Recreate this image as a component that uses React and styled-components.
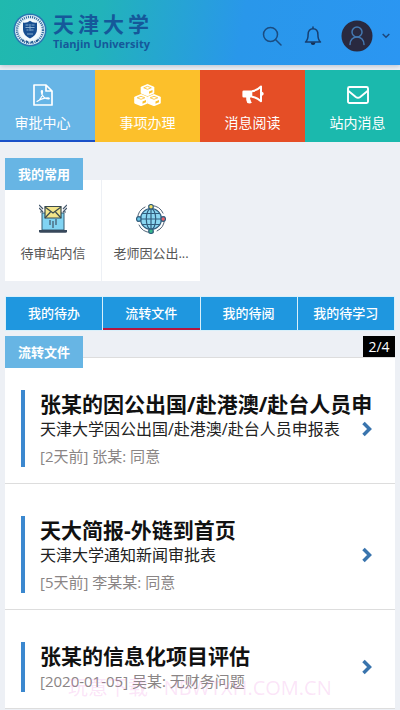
import React, { useState } from "react";
import styled, { createGlobalStyle } from "styled-components";

const GlobalStyle = createGlobalStyle`
  * {
    box-sizing: border-box;
  }

  body {
    margin: 0;
    background-color: #edf0f5;
    font-family: "Open Sans", "Noto Sans CJK SC", sans-serif;
    overflow-x: hidden;
  }

  button {
    font-family: inherit;
    border: none;
    padding: 0;
    background: none;
    cursor: pointer;
  }
`;

const Page = styled.div`
  position: relative;
  height: 100vh;
  overflow: hidden;
`;

const Header = styled.header`
  display: flex;
  align-items: center;
  justify-content: space-between;
  height: 65px;
  padding: 0 10px 0 13px;
  background: linear-gradient(100deg, #20b9ae 0%, #22b3ba 25%, #2997ea 60%, #2b96f2 100%);
  box-shadow: 0 1px 5px #b4bdcb;
`;

const Brand = styled.a`
  display: flex;
  align-items: center;
  gap: 6px;
  margin-top: -5px;
  color: #15589a;
  text-decoration: none;
`;

const BrandText = styled.span`
  display: flex;
  flex-direction: column;
`;

const BrandName = styled.span`
  display: flex;
  gap: 4px;
  font-family: "Noto Sans CJK SC", sans-serif;
  font-size: 21px;
  line-height: 28px;
  font-weight: 700;
`;

const BrandSub = styled.span`
  font-size: 11px;
  line-height: 14px;
  font-weight: 700;
`;

const HeaderActions = styled.div`
  display: flex;
  align-items: center;
  margin-top: 6px;
`;

const IconButton = styled.button`
  display: flex;
  margin-right: ${({ $gap }) => $gap || 0}px;
`;

const TileNav = styled.nav`
  display: flex;
  margin: 5px -10px 0;
`;

const NavTile = styled.button`
  flex: 1 0 105px;
  display: flex;
  flex-direction: column;
  align-items: center;
  gap: 7px;
  height: 72px;
  padding-top: 14px;
  background-color: ${({ $color }) => $color};
  border-bottom: 2px solid ${({ $active, $color }) => ($active ? "#1a50c8" : $color)};
  color: #fff;
  font-size: 14px;
  line-height: 20px;
`;

const Main = styled.main`
  padding: 16px 5px 0;
`;

const SectionLabel = styled.h2`
  position: relative;
  width: 78px;
  margin: 0;
  background-color: #67b5e4;
  color: #fff;
  font-size: 13px;
  line-height: 32px;
  font-weight: 700;
  text-align: center;
`;

const Shortcuts = styled.div`
  display: grid;
  grid-template-columns: 96px 98px;
  gap: 1px;
  width: 195px;
  margin-top: -10px;
`;

const Shortcut = styled.button`
  display: flex;
  flex-direction: column;
  align-items: center;
  gap: 9px;
  height: 101px;
  padding-top: 24px;
  background-color: #fff;
  color: #555;
  font-size: 13px;
  line-height: 20px;
`;

const Tabs = styled.div`
  display: grid;
  grid-template-columns: repeat(4, 1fr);
  gap: 1px;
  margin: 15px 0 5px;
  padding: 1px;
  background-color: #d9f0fa;
`;

const Tab = styled.button`
  height: 33px;
  padding-bottom: 2px;
  background-color: #1f97df;
  border-top: 2px solid #1f97df;
  border-bottom: 2px solid ${({ $active }) => ($active ? "#b5173f" : "#1f97df")};
  color: #fff;
  font-size: 13px;
  line-height: 20px;
  font-weight: 500;
`;

const ListHead = styled.div`
  display: flex;
  justify-content: space-between;
  align-items: flex-start;
`;

const Counter = styled.span`
  width: 32px;
  background-color: #000;
  color: #fff;
  font-size: 14px;
  line-height: 21px;
  text-align: center;
`;

const List = styled.ul`
  margin: -11px 0 0;
  padding: 0;
  list-style: none;
  background-color: #fff;
  border-top: 1px solid #ddd;
`;

const ListItem = styled.li`
  padding: 32px 16px 16px;
  border-bottom: 1px solid #ddd;
`;

const ItemLink = styled.a`
  display: flex;
  align-items: center;
  border-left: 4px solid #3b88cf;
  padding-left: 15px;
  color: #222;
  text-decoration: none;
`;

const ItemBody = styled.div`
  flex: 1;
  min-width: 0;
  white-space: nowrap;
`;

const ItemTitle = styled.h3`
  margin: 0;
  font-size: 21px;
  line-height: 28px;
  font-weight: 700;
  color: #111;
`;

const ItemText = styled.p`
  margin: 0 0 5px;
  font-size: 16px;
  line-height: 22px;
`;

const ItemMeta = styled.p`
  margin: 0;
  font-size: 15px;
  line-height: 22px;
  color: #8a8585;
`;

const Arrow = styled.svg`
  flex: none;
  width: 12px;
  height: 16px;
  margin: 0 6px 0 -18px;
`;

const Watermark = styled.div`
  position: absolute;
  left: 68px;
  bottom: 10px;
  color: rgba(236, 120, 220, 0.2);
  font-size: 20px;
  line-height: 24px;
  white-space: nowrap;
  pointer-events: none;
`;

const Crest = () => (
  <svg width="34" height="34" viewBox="0 0 34 34">
    <circle cx="17" cy="17" r="16.5" fill="#2a76b2" />
    <circle cx="17" cy="17" r="15" fill="#e5f2f8" />
    <circle cx="17" cy="17" r="13" fill="none" stroke="#34699f" strokeWidth="2.4" strokeDasharray="1.1 1" />
    <circle cx="17" cy="17" r="10.6" fill="#f4fafc" />
    <path d="M10 9.5q4 .8 7-1.8q3 2.6 7 1.8v7q0 5.500-7 9q-7-3.500-7-9z" fill="#174f91" />
    <path d="M12.500 12h3m3 0h3m-9 2.500h9m-8 2.500h2m2 0h3M17 11v7m-3 3h6" stroke="#8fb7d6" strokeWidth=".9" />
    <path d="M9 27l2 1m2 0l2 1.500m3 0l2-1m3 0l2-1.500" stroke="#20588f" strokeWidth="1.600" />
  </svg>
);

const SearchIcon = () => (
  <svg width="20" height="20" viewBox="0 0 20 20" fill="none" stroke="#1b4c80" strokeWidth="1.500">
    <circle cx="8.500" cy="8.500" r="7" />
    <path d="M13.500 13.500l5.500 5.500" strokeLinecap="round" />
  </svg>
);

const BellIcon = () => (
  <svg width="18" height="20" viewBox="0 0 18 20" fill="none" stroke="#173f70" strokeWidth="1.500" strokeLinejoin="round">
    <path d="M9 1v1.500M1.500 16h15c-2-1.500-2.600-4-2.600-7.500C13.900 5 12 2.700 9 2.700S4.100 5 4.100 8.500c0 3.500-.6 6-2.600 7.500z" strokeLinecap="round" />
    <path d="M6.500 16.500h5q-.5 2.500-2.500 2.500t-2.500-2.500z" fill="#152e52" stroke="none" />
  </svg>
);

const AvatarIcon = () => (
  <svg width="32" height="32" viewBox="0 0 32 32" fill="none" stroke="#4478b0" strokeWidth="1.500">
    <circle cx="16" cy="16" r="15.500" fill="#29293f" stroke="none" />
    <circle cx="16" cy="12" r="5" />
    <path d="M9 24.500c0-4.500 3-7.500 7-7.500s7 3 7 7.500" strokeLinecap="round" />
  </svg>
);

const CaretIcon = () => (
  <svg width="8" height="6" viewBox="0 0 8 6" fill="none" stroke="#1d4679" strokeWidth="1.500">
    <path d="M.7 1L4 4.300 7.300 1" />
  </svg>
);

const PdfIcon = () => (
  <svg width="20" height="22" viewBox="0 0 20 22" fill="none" stroke="#fff" strokeWidth="1.700" strokeLinejoin="round">
    <path d="M1 1h12l6 6v14H1zM13 1v6h6" />
    <path d="M4 17.500c3.500-1.500 5.500-6 5.500-10 0-1.500-1.300-1.200-1.200.3.200 4 3.500 7.200 7 7.200 1.500 0 1.200-1.200-.3-1.200-4 0-8 1.400-11 3.700z" strokeWidth="1.200" />
  </svg>
);

const cubes = [
  [13.5, 0],
  [7, 10],
  [20, 10],
];

const CubesIcon = () => (
  <svg width="27" height="22" viewBox="0 0 27 22">
    {cubes.map(([x, y]) => (
      <g key={x} transform={`translate(${x} ${y})`}>
        <path d="M0 0l6 2.400q.8.400.8 1.200v5q0 .8-.8 1.200L0 12.200l-6-2.400q-.8-.4-.8-1.200v-5q0-.8.8-1.200z" fill="#fff" />
        <path d="M-3.800 3.800L0 2.300l3.800 1.500L0 5.300z" fill="none" stroke="#fcc02b" strokeWidth=".8" />
        <path d="M1.500 7.400L5 6v2.300l-3.500 1.500z" fill="#fcc02b" />
      </g>
    ))}
  </svg>
);

const HornIcon = () => (
  <svg width="22" height="22" viewBox="0 0 22 22">
    <path d="M1.700 6.500h8.600v7H8.200q-.5 1.700.6 2.700-.4 1 1.100 2.200-1.500 1.800-4.600.7-1.500-2.600-1.100-5.600H1.700Q.4 13.500.4 12.200V7.800q0-1.300 1.300-1.300z" fill="#fff" />
    <path d="M10 7.200q5-.7 9-4.700v14.700q-4-3.700-9-4.500" fill="none" stroke="#fff" strokeWidth="2" strokeLinejoin="round" />
    <path d="M20 7.800q1.700.4 1.700 2t-1.700 2z" fill="#fff" />
  </svg>
);

const MailIcon = () => (
  <svg width="22" height="22" viewBox="0 0 22 22" fill="none" stroke="#fff" strokeWidth="1.900" strokeLinejoin="round">
    <rect x="1" y="3" width="20" height="16" rx="1.500" />
    <path d="M1.500 7l7.300 6q2.200 1.700 4.400 0l7.300-6" />
  </svg>
);

const LaptopMailIcon = () => (
  <svg width="28" height="30" viewBox="0 0 28 30">
    <path d="M3 9h22v17H3z" fill="#81d4f3" stroke="#355a70" />
    <path d="M0 26h28v1.500q0 1.200-1.500 1.200h-25Q0 28.700 0 27.500z" fill="#38485b" />
    <path d="M6 2.500h16V14H6z" fill="#f3e58a" stroke="#3b4b4e" strokeWidth="1.200" />
    <path d="M6 3l8 6 8-6M6 14l5.500-6M22 14l-5.500-6" fill="none" stroke="#3b4b4e" strokeWidth="1.200" />
    <path d="M0 1l4 4M0 4l4 4M1 8h3M28 1l-4 4M28 4l-4 4M27 8h-3M11 16v5M14 17v7M17 15v6" stroke="#42566b" strokeWidth="1.200" />
  </svg>
);

const GlobeIcon = () => (
  <svg width="30" height="30" viewBox="0 0 30 30" fill="none" stroke="#315e7e" strokeWidth="1.200">
    <circle cx="15" cy="15" r="13.400" stroke="#526477" strokeWidth="1" strokeDasharray="15 3 2 1" />
    <circle cx="15" cy="15" r="10.500" fill="#8bd7f2" />
    <ellipse cx="15" cy="15" rx="4.700" ry="10.500" />
    <path d="M15 4v22M4 15h22M6 9.500h18M6 20.500h18" />
    <circle cx="15" cy="2.800" r="2.300" fill="#f2df62" />
    <circle cx="2.800" cy="15" r="2.300" fill="#69c5e6" />
    <circle cx="27.200" cy="15" r="2.300" fill="#e8616b" />
    <circle cx="15" cy="27.200" r="2.300" fill="#37b98c" />
  </svg>
);

const navTiles = [
  { label: "审批中心", color: "#67b5e6", icon: PdfIcon },
  { label: "事项办理", color: "#fcc02b", icon: CubesIcon },
  { label: "消息阅读", color: "#e54e26", icon: HornIcon },
  { label: "站内消息", color: "#1bb9ad", icon: MailIcon },
];

const shortcuts = [
  { label: "待审站内信", icon: LaptopMailIcon },
  { label: "老师因公出...", icon: GlobeIcon },
];

const tabs = ["我的待办", "流转文件", "我的待阅", "我的待学习"];

const files = [
  {
    title: "张某的因公出国/赴港澳/赴台人员申",
    text: "天津大学因公出国/赴港澳/赴台人员申报表",
    meta: "[2天前] 张某: 同意",
  },
  {
    title: "天大简报-外链到首页",
    text: "天津大学通知新闻审批表",
    meta: "[5天前] 李某某: 同意",
  },
  {
    title: "张某的信息化项目评估",
    meta: "[2020-01-05] 吴某: 无财务问题",
  },
];

function App() {
  const [activeNav, setActiveNav] = useState(0);
  const [activeTab, setActiveTab] = useState(1);

  return (
    <Page>
      <GlobalStyle />
      <Header>
        <Brand href="#">
          <Crest />
          <BrandText>
            <BrandName>
              {[..."天津大学"].map((char) => (
                <span key={char}>{char}</span>
              ))}
            </BrandName>
            <BrandSub>Tianjin University</BrandSub>
          </BrandText>
        </Brand>
        <HeaderActions>
          <IconButton aria-label="搜索" $gap={22}>
            <SearchIcon />
          </IconButton>
          <IconButton aria-label="通知" $gap={19}>
            <BellIcon />
          </IconButton>
          <IconButton aria-label="用户" $gap={9}>
            <AvatarIcon />
          </IconButton>
          <IconButton aria-label="展开">
            <CaretIcon />
          </IconButton>
        </HeaderActions>
      </Header>
      <TileNav>
        {navTiles.map(({ label, color, icon: Icon }, index) => (
          <NavTile
            key={label}
            $color={color}
            $active={activeNav === index}
            onClick={() => setActiveNav(index)}
          >
            <Icon />
            {label}
          </NavTile>
        ))}
      </TileNav>
      <Main>
        <SectionLabel>我的常用</SectionLabel>
        <Shortcuts>
          {shortcuts.map(({ label, icon: Icon }) => (
            <Shortcut key={label}>
              <Icon />
              {label}
            </Shortcut>
          ))}
        </Shortcuts>
        <Tabs>
          {tabs.map((tab, index) => (
            <Tab key={tab} $active={activeTab === index} onClick={() => setActiveTab(index)}>
              {tab}
            </Tab>
          ))}
        </Tabs>
        <ListHead>
          <SectionLabel>{tabs[activeTab]}</SectionLabel>
          <Counter>2/4</Counter>
        </ListHead>
        <List>
          {files.map((file) => (
            <ListItem key={file.title}>
              <ItemLink href="#">
                <ItemBody>
                  <ItemTitle>{file.title}</ItemTitle>
                  {file.text && <ItemText>{file.text}</ItemText>}
                  <ItemMeta>{file.meta}</ItemMeta>
                </ItemBody>
                <Arrow viewBox="0 0 12 16" fill="none" stroke="#3974ad" strokeWidth="3.500">
                  <path d="M2.500 2l6 6-6 6" />
                </Arrow>
              </ItemLink>
            </ListItem>
          ))}
        </List>
      </Main>
      <Watermark>玩意下载 · NBWTXH.COM.CN</Watermark>
    </Page>
  );
}

export default App;
